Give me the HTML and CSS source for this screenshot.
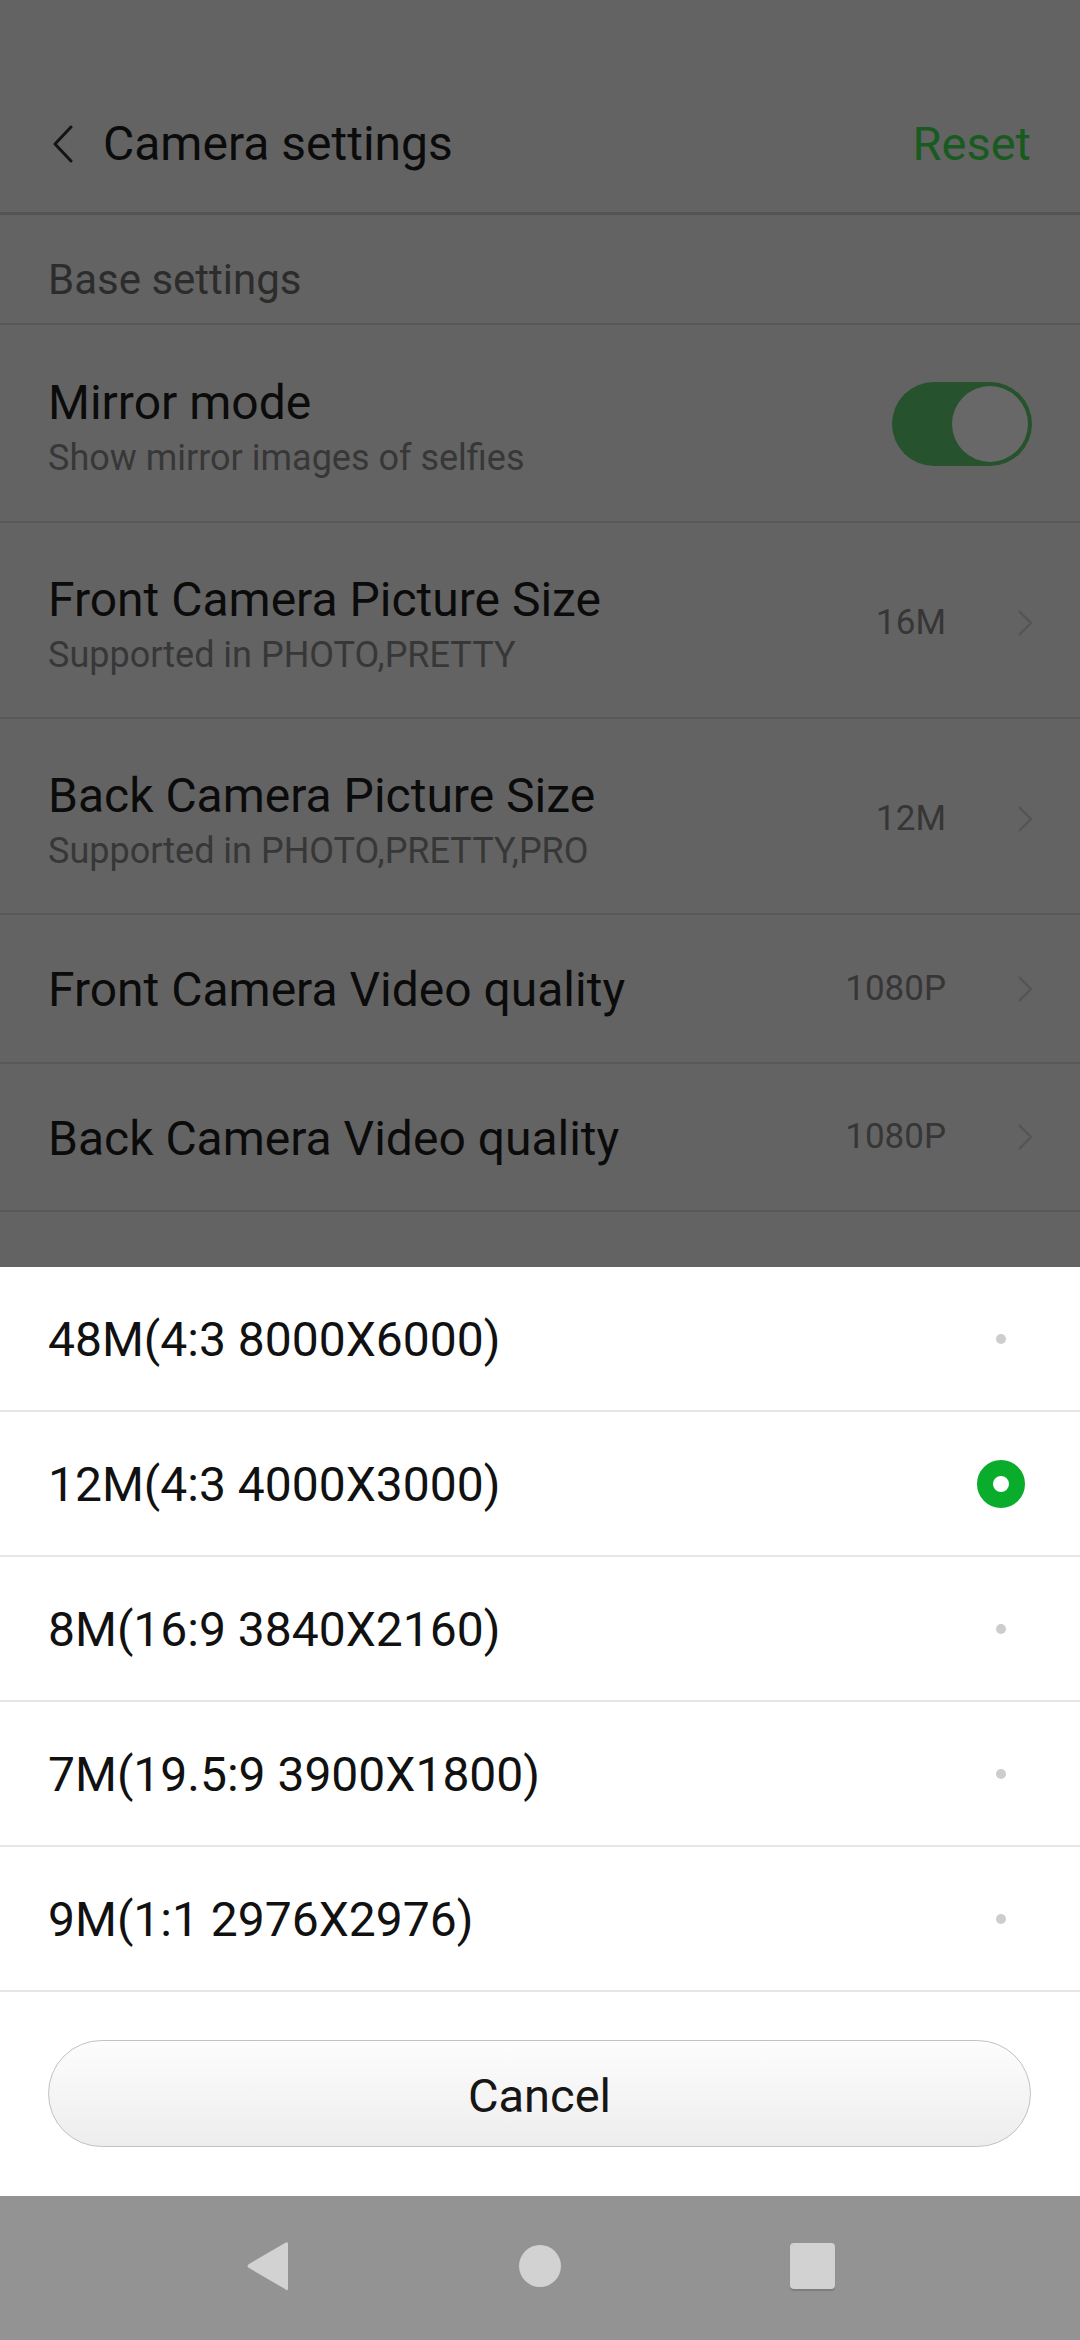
FILE: index.html
```html
<!DOCTYPE html>
<html lang="en">
<head>
<meta charset="utf-8">
<title>Camera settings</title>
<link rel="stylesheet" href="styles.css">
</head>
<body>
<div class="screen">
  <div class="page">
    <div class="statusbar"></div>
    <header class="appbar">
      <svg class="back" width="22" height="38" viewBox="0 0 22 38"><polyline points="19,2 3,19 19,36" fill="none" stroke="#141414" stroke-width="3" stroke-linecap="round" stroke-linejoin="round"/></svg>
      <h1 class="title">Camera settings</h1>
      <span class="reset">Reset</span>
    </header>
    <div class="section">Base settings</div>
    <div class="row row-tall row-mirror">
      <div class="texts">
        <div class="row-title">Mirror mode</div>
        <div class="row-sub">Show mirror images of selfies</div>
      </div>
      <div class="toggle"><div class="knob"></div></div>
    </div>
    <div class="row row-tall">
      <div class="texts">
        <div class="row-title">Front Camera Picture Size</div>
        <div class="row-sub">Supported in PHOTO,PRETTY</div>
      </div>
      <span class="value">16M</span>
      <svg class="chev" width="16" height="26" viewBox="0 0 16 26"><polyline points="2,1 14,13 2,25" fill="none" stroke="#545454" stroke-width="2.2" stroke-linejoin="round"/></svg>
    </div>
    <div class="row row-tall">
      <div class="texts">
        <div class="row-title">Back Camera Picture Size</div>
        <div class="row-sub">Supported in PHOTO,PRETTY,PRO</div>
      </div>
      <span class="value">12M</span>
      <svg class="chev" width="16" height="26" viewBox="0 0 16 26"><polyline points="2,1 14,13 2,25" fill="none" stroke="#545454" stroke-width="2.2" stroke-linejoin="round"/></svg>
    </div>
    <div class="row row-short">
      <div class="texts"><div class="row-title">Front Camera Video quality</div></div>
      <span class="value">1080P</span>
      <svg class="chev" width="16" height="26" viewBox="0 0 16 26"><polyline points="2,1 14,13 2,25" fill="none" stroke="#545454" stroke-width="2.2" stroke-linejoin="round"/></svg>
    </div>
    <div class="row row-short">
      <div class="texts"><div class="row-title">Back Camera Video quality</div></div>
      <span class="value">1080P</span>
      <svg class="chev" width="16" height="26" viewBox="0 0 16 26"><polyline points="2,1 14,13 2,25" fill="none" stroke="#545454" stroke-width="2.2" stroke-linejoin="round"/></svg>
    </div>
  </div>

  <div class="sheet">
    <div class="option"><span class="opt-label">48M(4:3 8000X6000)</span><span class="mark"><span class="dot"></span></span></div>
    <div class="option"><span class="opt-label">12M(4:3 4000X3000)</span><span class="mark"><span class="radio-on"></span></span></div>
    <div class="option"><span class="opt-label">8M(16:9 3840X2160)</span><span class="mark"><span class="dot"></span></span></div>
    <div class="option"><span class="opt-label">7M(19.5:9 3900X1800)</span><span class="mark"><span class="dot"></span></span></div>
    <div class="option"><span class="opt-label">9M(1:1 2976X2976)</span><span class="mark"><span class="dot"></span></span></div>
    <div class="cancel-wrap"><button class="cancel">Cancel</button></div>
  </div>

  <nav class="navbar">
    <span class="nav-cell"><svg width="46" height="52" viewBox="0 0 46 52"><path d="M43 4 L43 48 Q43 52 40 49 L4 28 Q1 26 4 24 L40 3 Q43 1 43 4 Z" fill="#d2d2d2"/></svg></span>
    <span class="nav-cell"><span class="nav-home"></span></span>
    <span class="nav-cell"><span class="nav-recent"></span></span>
  </nav>
</div>
</body>
</html>
```

FILE: styles.css
```css
* { box-sizing: border-box; }
html, body { margin: 0; padding: 0; }
body {
  width: 1080px;
  height: 2340px;
  background: #636363;
  font-family: Roboto, "Noto Sans", "Liberation Sans", sans-serif;
  overflow: hidden;
}
.screen {
  width: 1080px;
  height: 2340px;
  display: flex;
  flex-direction: column;
}
.page {
  height: 1267px;
  overflow: hidden;
  background: #636363;
  flex: none;
}
.statusbar { height: 75px; }
.appbar {
  height: 140px;
  border-bottom: 3px solid #545454;
  display: flex;
  align-items: center;
  padding: 0 49px 0 52px;
}
.back { flex: none; margin-right: 29px; }
.title {
  margin: 0;
  flex: 1;
  font-size: 48px;
  font-weight: 400;
  color: #0b0b0b;
}
.reset {
  font-size: 47px;
  color: #195a21;
}
.section {
  height: 110px;
  border-bottom: 2px solid #585858;
  padding: 40px 48px 0;
  font-size: 42px;
  line-height: 50px;
  color: #2c2c2c;
}
.row {
  display: flex;
  align-items: center;
  border-bottom: 2px solid #585858;
  padding: 0 47px 0 48px;
}
.row-tall { height: 196px; align-items: flex-start; padding-top: 49px; }
.row-mirror { height: 198px; padding-top: 50px; }
.row-short { height: 149px; }
.row-tall + .row-short { height: 149px; }
.row-short + .row-short { height: 148px; }
.texts { flex: 1; display: flex; flex-direction: column; gap: 5px; }
.row-title {
  font-size: 48px;
  line-height: 56px;
  color: #0b0b0b;
}
.row-short .row-title { padding-top: 3px; }
.row-sub {
  font-size: 36px;
  line-height: 44px;
  color: #373737;
}
.value {
  font-size: 35px;
  color: #363636;
  margin-right: 71px;
  line-height: 44px;
}
.row-tall .value { margin-top: 29px; }
.chev { flex: none; }
.row-tall .chev { margin-top: 38px; }
.toggle {
  width: 140px;
  height: 84px;
  border-radius: 42px;
  background: #27522e;
  margin-top: 7px;
  margin-right: 1px;
  display: flex;
  justify-content: flex-end;
  align-items: center;
  padding-right: 4px;
  flex: none;
}
.knob {
  width: 76px;
  height: 76px;
  border-radius: 50%;
  background: #686868;
}

.sheet {
  background: #ffffff;
  height: 929px;
  flex: none;
  display: flex;
  flex-direction: column;
}
.option {
  height: 145px;
  border-bottom: 2px solid #e6e6e6;
  display: flex;
  align-items: center;
  padding: 0 55px 0 48px;
  flex: none;
}
.opt-label {
  flex: 1;
  font-size: 48px;
  color: #111111;
  padding-top: 2px;
}
.mark {
  width: 48px;
  height: 48px;
  display: flex;
  align-items: center;
  justify-content: center;
}
.dot {
  width: 10px;
  height: 10px;
  border-radius: 50%;
  background: #cdcdcd;
}
.radio-on {
  width: 48px;
  height: 48px;
  border-radius: 50%;
  border: 16px solid #0aac2c;
  background: #ffffff;
}
.cancel-wrap {
  flex: 1;
  padding: 48px 49px 0 48px;
}
.cancel {
  width: 100%;
  height: 107px;
  border-radius: 54px;
  border: 1.5px solid #c2c2c2;
  background: linear-gradient(#fdfdfd, #ededed);
  font-family: Roboto, "Noto Sans", "Liberation Sans", sans-serif;
  font-size: 47px;
  color: #161616;
  padding: 4px 0 0;
}

.navbar {
  flex: 1;
  background: #939393;
  display: flex;
  justify-content: center;
  align-items: center;
  gap: 212px;
  padding-bottom: 4px;
}
.nav-cell {
  width: 60px;
  height: 60px;
  display: flex;
  align-items: center;
  justify-content: center;
}
.nav-home {
  width: 42px;
  height: 42px;
  border-radius: 50%;
  background: #d2d2d2;
}
.nav-recent {
  width: 45px;
  height: 46px;
  border-radius: 4px;
  background: #d2d2d2;
  box-shadow: 0 2px 1px rgba(0,0,0,0.15);
}
```
